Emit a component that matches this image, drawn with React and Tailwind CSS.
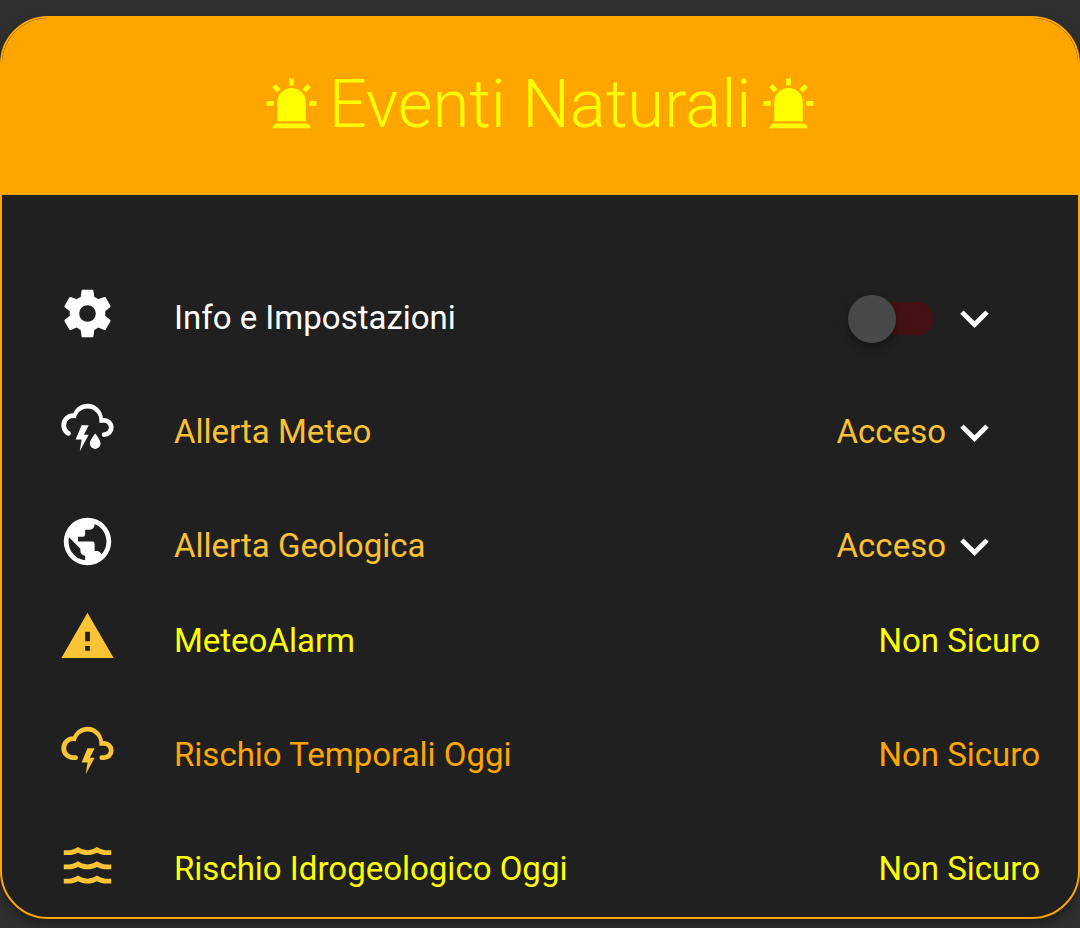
import React, { useState } from "react";

const icons = {
  siren:
    "M6,6.9L3.87,4.78L5.28,3.37L7.4,5.5L6,6.9M13,1V4H11V1H13M20.13,4.78L18,6.9L16.6,5.5L18.72,3.37L20.13,4.78M4.5,10.5V12.5H1.5V10.5H4.5M19.5,10.5H22.5V12.5H19.5V10.5M6,20H18A2,2 0 0,1 20,22H4A2,2 0 0,1 6,20M12,5A6,6 0 0,1 18,11V19H6V11A6,6 0 0,1 12,5Z",
  cog: "M12,15.5A3.5,3.5 0 0,1 8.5,12A3.5,3.5 0 0,1 12,8.5A3.5,3.5 0 0,1 15.5,12A3.5,3.5 0 0,1 12,15.5M19.43,12.97C19.47,12.65 19.5,12.33 19.5,12C19.5,11.67 19.47,11.34 19.43,11L21.54,9.37C21.73,9.22 21.78,8.95 21.66,8.73L19.66,5.27C19.54,5.05 19.27,4.96 19.05,5.05L16.56,6.05C16.04,5.66 15.5,5.32 14.87,5.07L14.5,2.42C14.46,2.18 14.25,2 14,2H10C9.75,2 9.54,2.18 9.5,2.42L9.13,5.07C8.5,5.32 7.96,5.66 7.44,6.05L4.95,5.05C4.73,4.96 4.46,5.05 4.34,5.27L2.34,8.73C2.21,8.95 2.27,9.22 2.46,9.37L4.57,11C4.53,11.34 4.5,11.67 4.5,12C4.5,12.33 4.53,12.65 4.57,12.97L2.46,14.63C2.27,14.78 2.21,15.05 2.34,15.27L4.34,18.73C4.46,18.95 4.73,19.03 4.95,18.95L7.44,17.94C7.96,18.34 8.5,18.68 9.13,18.93L9.5,21.58C9.54,21.82 9.75,22 10,22H14C14.25,22 14.46,21.82 14.5,21.58L14.87,18.93C15.5,18.67 16.04,18.34 16.56,17.94L19.05,18.95C19.27,19.03 19.54,18.95 19.66,18.73L21.66,15.27C21.78,15.05 21.73,14.78 21.54,14.63L19.43,12.97Z",
  stormRain:
    "M4.5,13.59C5,13.87 5.14,14.5 4.87,14.96C4.59,15.44 4,15.6 3.5,15.33V15.33C2,14.47 1,12.85 1,11A5,5 0 0,1 6,6C7,3.65 9.3,2 12,2C15.43,2 18.24,4.66 18.5,8.03L19,8A4,4 0 0,1 23,12A4,4 0 0,1 19,16A1,1 0 0,1 18,15A1,1 0 0,1 19,14A2,2 0 0,0 21,12A2,2 0 0,0 19,10H17V9A5,5 0 0,0 12,4C9.5,4 7.45,5.82 7.06,8.19C6.73,8.07 6.37,8 6,8A3,3 0 0,0 3,11C3,12.11 3.6,13.08 4.5,13.6V13.59M9.5,11H12.5L10.5,15H12.5L8.75,22L9.5,17H7L9.5,11M17.5,18.67C17.5,19.96 16.5,21 15.25,21C14,21 13,19.96 13,18.67C13,17.12 15.25,14.5 15.25,14.5C15.25,14.5 17.5,17.12 17.5,18.67Z",
  earth:
    "M17.9,17.39C17.64,16.59 16.89,16 16,16H15V13A1,1 0 0,0 14,12H8V10H10A1,1 0 0,0 11,9V7H13A2,2 0 0,0 15,5V4.59C17.93,5.77 20,8.64 20,12C20,14.08 19.2,15.97 17.9,17.39M11,19.93C7.05,19.44 4,16.08 4,12C4,11.38 4.08,10.78 4.21,10.21L9,15V16A2,2 0 0,0 11,18M12,2A10,10 0 0,0 2,12A10,10 0 0,0 12,22A10,10 0 0,0 22,12A10,10 0 0,0 12,2Z",
  alert: "M13,14H11V10H13M13,18H11V16H13M1,21H23L12,2L1,21Z",
  storm:
    "M6,16A5,5 0 0,1 1,11A5,5 0 0,1 6,6C7,3.65 9.3,2 12,2C15.43,2 18.24,4.66 18.5,8.03L19,8A4,4 0 0,1 23,12A4,4 0 0,1 19,16H18A1,1 0 0,1 17,15A1,1 0 0,1 18,14H19A2,2 0 0,0 21,12A2,2 0 0,0 19,10H17V9A5,5 0 0,0 12,4C9.5,4 7.45,5.82 7.06,8.19C6.73,8.07 6.37,8 6,8A3,3 0 0,0 3,11A3,3 0 0,0 6,14H7A1,1 0 0,1 8,15A1,1 0 0,1 7,16H6M12,11H15L13,15H15L11.25,22L12,17H9.5L12,11Z",
  waves:
    "M20,12H22V14H20C18.62,14 17.26,13.65 16,13C13.5,14.3 10.5,14.3 8,13C6.74,13.65 5.37,14 4,14H2V12H4C5.39,12 6.78,11.53 8,10.67C10.44,12.38 13.56,12.38 16,10.67C17.22,11.53 18.61,12 20,12M20,6H22V8H20C18.62,8 17.26,7.65 16,7C13.5,8.3 10.5,8.3 8,7C6.74,7.65 5.37,8 4,8H2V6H4C5.39,6 6.78,5.53 8,4.67C10.44,6.38 13.56,6.38 16,4.67C17.22,5.53 18.61,6 20,6M20,18H22V20H20C18.62,20 17.26,19.65 16,19C13.5,20.3 10.5,20.3 8,19C6.74,19.65 5.37,20 4,20H2V18H4C5.39,18 6.78,17.53 8,16.67C10.44,18.38 13.56,18.38 16,16.67C17.22,17.53 18.61,18 20,18Z",
  chevron: "M7.41,8.58L12,13.17L16.59,8.58L18,10L12,16L6,10L7.41,8.58Z",
};

function Icon({ name, className = "" }) {
  return (
    <svg viewBox="0 0 24 24" fill="currentColor" aria-hidden="true" className={`size-[57px] shrink-0 ${className}`}>
      <path d={icons[name]} />
    </svg>
  );
}

function Row({ icon, iconClass, label, labelClass, htmlFor, className, children }) {
  const Label = htmlFor ? "label" : "span";
  return (
    <li className={`flex h-[95px] items-center pl-[57px] ${className}`}>
      <span className={`pb-[10px] ${iconClass}`}>
        <Icon name={icon} />
      </span>
      <Label htmlFor={htmlFor} className={`ml-[58px] min-w-0 flex-1 truncate pb-0.5 ${labelClass}`}>
        {label}
      </Label>
      {children}
    </li>
  );
}

function ExpandButton({ label }) {
  const [open, setOpen] = useState(false);
  return (
    <button type="button" aria-label={label} aria-expanded={open} onClick={() => setOpen(!open)} className="text-white">
      <Icon name="chevron" className={open ? "rotate-180" : ""} />
    </button>
  );
}

function Switch({ id }) {
  return (
    <span className="relative mr-3 flex h-12 w-[86px] shrink-0 items-center">
      <input
        id={id}
        type="checkbox"
        role="switch"
        className="peer h-[33px] w-full cursor-pointer appearance-none rounded-full bg-[#441214]"
      />
      <span className="pointer-events-none absolute left-0 size-12 rounded-full bg-[#484848] shadow-[0_4px_10px_rgba(0,0,0,0.4)] peer-checked:left-[38px]" />
    </span>
  );
}

const alerts = [
  { icon: "stormRain", label: "Allerta Meteo" },
  { icon: "earth", label: "Allerta Geologica" },
];

const risks = [
  { icon: "alert", label: "MeteoAlarm", color: "text-[#ffff00]" },
  { icon: "storm", label: "Rischio Temporali Oggi", color: "text-[#ffa500]" },
  { icon: "waves", label: "Rischio Idrogeologico Oggi", color: "text-[#ffff00]" },
];

export default function App() {
  return (
    <main className="min-h-screen overflow-hidden bg-[#303030] pt-4 font-['Roboto',sans-serif] text-[33px] leading-[48px]">
      <section className="overflow-hidden rounded-[48px] border-2 border-[#ffa500] bg-[#202020] shadow-[0_5px_12px_rgba(0,0,0,0.4)]">
        <header className="flex items-center justify-center gap-[9px] bg-[#ffa500] pt-[46px] pb-[51px] text-[#ffff00]">
          <Icon name="siren" />
          <h1 className="text-[67px] leading-[80px] font-light">Eventi Naturali</h1>
          <Icon name="siren" />
        </header>
        <ul className="flex flex-col gap-[19px] pt-[76px]">
          <Row
            icon="cog"
            iconClass="text-white"
            label="Info e Impostazioni"
            labelClass="text-white"
            htmlFor="info-switch"
            className="pr-[75px]"
          >
            <Switch id="info-switch" />
            <ExpandButton label="Espandi Info e Impostazioni" />
          </Row>
          {alerts.map((a) => (
            <Row
              key={a.label}
              icon={a.icon}
              iconClass="text-white"
              label={a.label}
              labelClass="text-[#fbc132]"
              className="pr-[75px]"
            >
              <span className="pb-0.5 text-[#fbc132]">Acceso</span>
              <ExpandButton label={`Espandi ${a.label}`} />
            </Row>
          ))}
        </ul>
        <ul className="flex flex-col gap-[19px]">
          {risks.map((r) => (
            <Row
              key={r.label}
              icon={r.icon}
              iconClass="text-[#fbc437]"
              label={r.label}
              labelClass={r.color}
              className="pr-[38px]"
            >
              <span className={`pb-0.5 ${r.color}`}>Non Sicuro</span>
            </Row>
          ))}
        </ul>
      </section>
    </main>
  );
}
